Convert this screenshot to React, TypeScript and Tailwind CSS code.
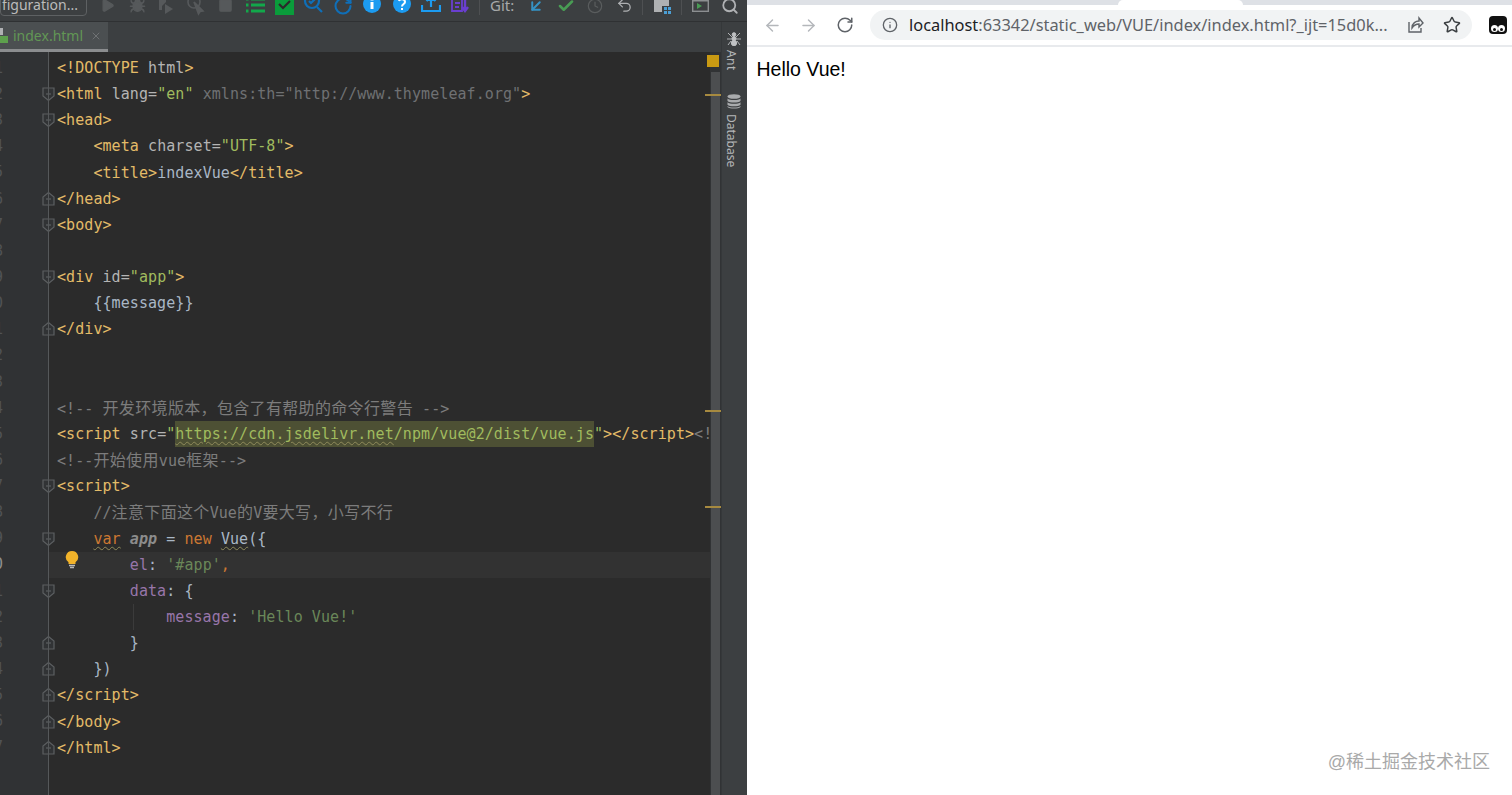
import React from "react";
import { ArrowLeft, ArrowRight, RotateCw, Star, Info, Search, Undo2, Clock, Check, ArrowDownLeft, X, Play, Square, Bug } from "lucide-react";

const mono = { fontFamily: '"DejaVu Sans Mono","Noto Sans CJK SC",monospace' };

function T({ children }: { children: React.ReactNode }) { return <span className="text-[#e3bb68]">{children}</span>; }
function A({ children }: { children: React.ReactNode }) { return <span className="text-[#b4b4b4]">{children}</span>; }
function S({ children }: { children: React.ReactNode }) { return <span className="text-[#a0bb5e]">{children}</span>; }
function G({ children }: { children: React.ReactNode }) { return <span className="text-[#6f7173]">{children}</span>; }
function C({ children }: { children: React.ReactNode }) { return <span className="text-[#7c7c7c]">{children}</span>; }
function H({ children }: { children: React.ReactNode }) { return <span className="text-[16px] tracking-[0.34px]" style={{ fontFamily: '"Noto Sans CJK SC",sans-serif' }}>{children}</span>; }
function P({ children }: { children: React.ReactNode }) { return <span className="text-[#9876aa]">{children}</span>; }
function W({ children, className = "" }: { children: React.ReactNode; className?: string }) {
  return <span className={`underline decoration-wavy decoration-[#8f8a5a] decoration-1 underline-offset-2 ${className}`}>{children}</span>;
}

const lines: { n: number; fold?: "open" | "close"; code?: React.ReactNode; cur?: boolean }[] = [
  { n: 1, code: <><T>&lt;!DOCTYPE</T> <A>html</A><T>&gt;</T></> },
  { n: 2, fold: "open", code: <><T>&lt;html</T> <A>lang=</A><S>"en"</S> <G>xmlns:th="http://www.thymeleaf.org"</G><T>&gt;</T></> },
  { n: 3, fold: "open", code: <T>&lt;head&gt;</T> },
  { n: 4, code: <>{"    "}<T>&lt;meta</T> <A>charset=</A><S>"UTF-8"</S><T>&gt;</T></> },
  { n: 5, code: <>{"    "}<T>&lt;title&gt;</T><span className="text-[#a9b7c6]">indexVue</span><T>&lt;/title&gt;</T></> },
  { n: 6, fold: "close", code: <T>&lt;/head&gt;</T> },
  { n: 7, fold: "open", code: <T>&lt;body&gt;</T> },
  { n: 8 },
  { n: 9, fold: "open", code: <><T>&lt;div</T> <A>id=</A><S>"app"</S><T>&gt;</T></> },
  { n: 10, code: <span className="text-[#a9b7c6]">{"    {{message}}"}</span> },
  { n: 11, fold: "close", code: <T>&lt;/div&gt;</T> },
  { n: 12 },
  { n: 13 },
  { n: 14, code: <C>&lt;!-- <H>开发环境版本，包含了有帮助的命令行警告</H> --&gt;</C> },
  { n: 15, code: <><T>&lt;script</T> <A>src=</A><S>"</S><span className="inline-block bg-[#4d5034] text-[#a0bb5e]"><W>https://cdn.jsdelivr.net</W>/npm/vue@2/dist/vue.js</span><S>"</S><T>&gt;&lt;/script&gt;</T><C>&lt;!-- 开发环境</C></> },
  { n: 16, code: <C>&lt;!--<H>开始使用</H>vue<H>框架</H>--&gt;</C> },
  { n: 17, fold: "open", code: <T>&lt;script&gt;</T> },
  { n: 18, code: <C>{"    //"}<H>注意下面这个</H>Vue<H>的</H>V<H>要大写，小写不行</H></C> },
  { n: 19, fold: "open", code: <>{"    "}<W className="text-[#cc7832]">var</W> <span className="font-bold italic text-[#8c8c8c]">app</span> <span className="text-[#a9b7c6]">=</span> <span className="text-[#cc7832]">new</span> <W className="text-[#a9b7c6]">Vue</W><span className="text-[#a9b7c6]">({"{"}</span></> },
  { n: 20, cur: true, code: <>{"        "}<P>el</P><span className="text-[#a9b7c6]">:</span> <span className="text-[#6a8759]">'#app'</span><span className="text-[#cc7832]">,</span></> },
  { n: 21, fold: "open", code: <>{"        "}<P>data</P><span className="text-[#a9b7c6]">: {"{"}</span></> },
  { n: 22, code: <>{"            "}<P>message</P><span className="text-[#a9b7c6]">:</span> <span className="text-[#6a8759]">'Hello Vue!'</span></> },
  { n: 23, fold: "close", code: <span className="text-[#a9b7c6]">{"        }"}</span> },
  { n: 24, fold: "close", code: <span className="text-[#a9b7c6]">{"    })"}</span> },
  { n: 25, fold: "close", code: <T>&lt;/script&gt;</T> },
  { n: 26, fold: "close", code: <T>&lt;/body&gt;</T> },
  { n: 27, fold: "close", code: <T>&lt;/html&gt;</T> },
];

function Fold({ kind }: { kind: "open" | "close" }) {
  return (
    <svg width="13" height="16" viewBox="0 0 13 16" className="absolute left-[42px] top-[5px]" fill="#313335" stroke="#5c5f61" strokeWidth="1.2">
      {kind === "open" ? <path d="M1 2h11v8l-5.500 4.500L1 10z" /> : <path d="M1 14h11V6L6.500 1.500 1 6z" />}
      <path d="M4 8h5" />
    </svg>
  );
}

function Cell({ children, w = "w-[29.4px]" }: { children: React.ReactNode; w?: string }) {
  return <div className={`${w} flex shrink-0 items-center justify-center`}>{children}</div>;
}
function Sep({ className }: { className: string }) {
  return <div className={`h-[18px] w-px shrink-0 bg-[#4e5052] ${className}`} />;
}

function Toolbar() {
  return (
    <div className="h-[22px] shrink-0 overflow-hidden border-b border-[#2f3133] bg-[#3c3f41]">
      <div className="flex h-[11px] items-center">
        <div className="-mt-[2px] flex h-[22px] w-[87px] shrink-0 items-center justify-end rounded-[4px] border border-[#5e6163] pr-[8px] text-[14px] text-[#bbbbbb]" style={{ fontFamily: '"Noto Sans",sans-serif' }}>
          figuration...
        </div>
        <div className="w-[6px] shrink-0" />
        <Cell><Play size={15} fill="#56595b" stroke="#56595b" /></Cell>
        <Cell><Bug size={17} fill="#56595b" stroke="#56595b" /></Cell>
        <Cell>
          <svg width="20" height="20" viewBox="0 0 20 20"><path d="M3 1h7v5l-4 4v4H3z" fill="#56595b" /><path d="M9 8l8 5-8 5z" fill="#56595b" /></svg>
        </Cell>
        <Cell>
          <svg width="20" height="20" viewBox="0 0 20 20" fill="none" stroke="#56595b" strokeWidth="1.600"><circle cx="8" cy="6" r="6" /><path d="M8 6l9 9-3 .5-1.500 2.500z" fill="#56595b" /></svg>
        </Cell>
        <Cell><Square size={15} fill="#56595b" stroke="#56595b" /></Cell>
        <Cell>
          <svg width="20" height="20" viewBox="0 0 20 20" stroke="#12a84b" strokeWidth="3"><path d="M6 3h14M6 9h14M6 15h14" /><path d="M1 3h2.500M1 9h2.500M1 15h2.500" /></svg>
        </Cell>
        <Cell>
          <svg width="19" height="19" viewBox="0 0 19 19"><rect width="19" height="19" fill="#0a9c3b" /><path d="M4 8l4 4 7-7" fill="none" stroke="#2b2b2b" strokeWidth="2.200" /></svg>
        </Cell>
        <Cell>
          <svg width="21" height="21" viewBox="0 0 21 21" fill="none" stroke="#0f6fb8" strokeWidth="2.200"><circle cx="9" cy="6" r="7" /><path d="M14 12l5 5M6 6l2 2 4-4" /></svg>
        </Cell>
        <Cell><RotateCw size={20} stroke="#0f6fb8" strokeWidth={2.500} /></Cell>
        <Cell>
          <svg width="20" height="20" viewBox="0 0 20 20"><circle cx="10" cy="8" r="9" fill="#1c9bf0" /><rect x="8.500" y="6" width="3" height="7" fill="#fff" /><rect x="8.500" y="2" width="3" height="2.500" fill="#fff" /></svg>
        </Cell>
        <Cell>
          <svg width="20" height="20" viewBox="0 0 20 20"><circle cx="10" cy="8" r="9" fill="#1c9bf0" /><path d="M7 5c1-3 6-2 6 1 0 2-3 2-3 4.500" fill="none" stroke="#fff" strokeWidth="2" /><rect x="9" y="12" width="2" height="2" fill="#fff" /></svg>
        </Cell>
        <Cell>
          <svg width="20" height="20" viewBox="0 0 20 20" fill="none" stroke="#1c9bf0" strokeWidth="2.200"><path d="M1 9v6h18V9" /><path d="M10 11V1" /><path d="M5.500 5L10 .5 14.500 5" fill="#1c9bf0" /></svg>
        </Cell>
        <Cell>
          <svg width="20" height="20" viewBox="0 0 20 20" fill="none" stroke="#6a3fd0" strokeWidth="1.800"><path d="M2 -1h10v16H2zM5 3h5M5 7h5M5 11h4" /><path d="M15 3v12M12 11l3 4 3-4" strokeWidth="2.400" /></svg>
        </Cell>
        <Sep className="ml-[4px]" />
        <div className="ml-[10px] w-[28px] shrink-0 text-[15px] text-[#a7a9aa]" style={{ fontFamily: '"Noto Sans",sans-serif' }}>Git:</div>
        <div className="w-[3.500px] shrink-0" />
        <Cell><ArrowDownLeft size={18} stroke="#3592c4" strokeWidth={2.600} /></Cell>
        <Cell><Check size={18} stroke="#499c54" strokeWidth={3.400} /></Cell>
        <Cell><Clock size={16} stroke="#5a5d5e" strokeWidth={1.800} /></Cell>
        <Cell><Undo2 size={17} stroke="#afb1b3" strokeWidth={1.800} /></Cell>
        <Sep className="ml-[3px]" />
        <Cell w="w-[38px]">
          <svg width="18" height="18" viewBox="0 0 18 18"><path d="M1 0h7l2 3h6v6H9v6H1z" fill="#afb1b3" /><rect x="11" y="10" width="3" height="3" fill="#4b9fd5" /><rect x="15" y="10" width="3" height="3" fill="#4b9fd5" /><rect x="11" y="14" width="3" height="3" fill="#4b9fd5" /><rect x="15" y="14" width="3" height="3" fill="#4b9fd5" /></svg>
        </Cell>
        <Sep className="" />
        <Cell w="w-[36px]">
          <svg width="17" height="16" viewBox="0 0 17 16"><rect x=".7" y=".7" width="15.600" height="12.600" fill="none" stroke="#8c8f91" strokeWidth="1.400" /><rect x="1" y="1" width="15" height="2.500" fill="#8c8f91" /><path d="M5 5l5 3-5 3z" fill="#499c54" /></svg>
        </Cell>
        <Cell w="w-[24px]"><Search size={18} stroke="#afb1b3" strokeWidth={2.400} /></Cell>
      </div>
    </div>
  );
}

function Editor() {
  return (
    <div className="relative flex min-h-0 min-w-0 flex-1 flex-col">
      <div className="flex h-[30px] shrink-0 bg-[#3c3f41]">
        <div className="flex h-full w-[108px] items-center border-b-[3px] border-[#8b8d8f] bg-[#4b4f51]">
          <svg width="8" height="18" viewBox="0 0 8 18" className="shrink-0"><rect x="0" y="1" width="3" height="7" fill="#afb1b3" /><rect x="0" y="9" width="8" height="7" fill="#5da04d" /></svg>
          <span className="ml-[5px] text-[14px] text-[#629755]" style={{ fontFamily: '"Noto Sans",sans-serif' }}>index.html</span>
          <X size={12} className="ml-[7px] shrink-0" stroke="#6f7274" />
        </div>
      </div>
      <div className="relative flex min-h-0 flex-1 overflow-hidden bg-[#2b2b2b]">
        <div className="absolute bottom-0 left-0 top-0 w-[48px] bg-[#303234]" />
        <div className="relative min-w-0 flex-1 overflow-hidden pt-[3px]">
          {lines.map((l) => (
            <div key={l.n} className={`relative flex h-[26.15px] items-center ${l.cur ? "bg-[#323232]" : ""}`}>
              <div className={`flex h-full w-[48px] shrink-0 items-center bg-[#303234] text-[15px] ${l.n === 20 ? "text-[#8f8f8f]" : "text-[#505355]"}`} style={mono}>
                <div className="flex w-[3px] justify-end overflow-hidden"><span>{l.n % 10}</span></div>
              </div>
              {l.fold && <Fold kind={l.fold} />}
              <pre className="pl-[9px] text-[15px] leading-[26.15px] tracking-[0.07px] whitespace-pre" style={mono}>{l.code}</pre>
              {l.n === 20 && (
                <svg width="14" height="18" viewBox="0 0 14 18" className="absolute left-[65px] top-[-1px]">
                  <path d="M7 0a6.200 6.200 0 0 1 3.500 11.300V13h-7v-1.700A6.200 6.200 0 0 1 7 0z" fill="#f2b32a" />
                  <path d="M4 14.500h6M5 16.500h4" stroke="#b8b8b8" strokeWidth="1.300" />
                </svg>
              )}
              {l.n === 22 && <div className="absolute left-[133px] top-0 h-full w-px bg-[#3b3b3b]" />}
            </div>
          ))}
        </div>
        <div className="absolute bottom-0 left-[48px] top-0 w-px bg-[#55585a]" />
        <div className="relative w-[11px] shrink-0 bg-[#313335]">
          <div className="absolute bottom-0 left-[1px] top-[20px] w-[9px] bg-[#4c4e50]" />
          <div className="absolute left-[-3px] top-[3px] h-[12px] w-[12px] bg-[#c99a13]" />
          <div className="absolute left-[-5px] top-[42px] h-[2px] w-[16px] bg-[#a78a40]" />
          <div className="absolute left-[-5px] top-[358px] h-[2px] w-[16px] bg-[#a78a40]" />
          <div className="absolute left-[-5px] top-[454px] h-[2px] w-[16px] bg-[#a78a40]" />
        </div>
      </div>
    </div>
  );
}

function SideStrip() {
  return (
    <div className="flex w-[26px] shrink-0 flex-col items-center border-l border-[#35383a] bg-[#3c3f41] pr-[2px] pt-[10px] text-[12px] text-[#b4b6b8]" style={{ fontFamily: '"Noto Sans",sans-serif' }}>
      <svg width="14" height="14" viewBox="0 0 14 14" fill="#c0c2c4" stroke="#c0c2c4">
        <circle cx="7" cy="2.500" r="1.800" /><ellipse cx="7" cy="6.500" rx="2" ry="2" /><ellipse cx="7" cy="11" rx="2.600" ry="2.800" />
        <path d="M1 1l4 4M13 1L9 5M0 7h14M1 13l3-4M13 13l-3-4" strokeWidth=".9" fill="none" />
      </svg>
      <span className="-ml-[5px] mt-[4px] leading-[20px] tracking-[0.4px] [writing-mode:vertical-rl]">Ant</span>
      <svg width="14" height="15" viewBox="0 0 14 15" className="mt-[23px]" fill="#a9abad">
        <ellipse cx="7" cy="2.500" rx="6.500" ry="2.300" /><path d="M.5 4.500c2 2 11 2 13 0v2.500c-2 2-11 2-13 0zM.5 8.200c2 2 11 2 13 0v2.600c-2 2-11 2-13 0zM.5 12c2 2 11 2 13 0v1c-2 2-11 2-13 0z" />
      </svg>
      <span className="-ml-[5px] mt-[5px] leading-[20px] [writing-mode:vertical-rl]">Database</span>
    </div>
  );
}

function Browser() {
  return (
    <div className="relative flex min-w-0 flex-1 flex-col bg-white">
      <div className="flex h-[5px] shrink-0 bg-[#dee1e6]">
        <div className="ml-[371px] w-[125px] rounded-t-[6px] bg-white" />
      </div>
      <div className="flex h-[42px] shrink-0 items-center border-b-2 border-[#e8eaed] pl-[16px]">
        <ArrowLeft size={19} stroke="#b4b7bb" strokeWidth={1.800} />
        <ArrowRight size={19} stroke="#b4b7bb" strokeWidth={1.800} className="ml-[17px]" />
        <RotateCw size={18} stroke="#5f6368" strokeWidth={2} className="ml-[18px]" />
        <div className="ml-[16px] flex h-[30px] w-[602px] shrink-0 items-center rounded-full bg-[#f1f3f4] pl-[12px]" style={{ fontFamily: '"Noto Sans",sans-serif' }}>
          <Info size={16} stroke="#5f6368" strokeWidth={2} />
          <span className="ml-[11px] whitespace-nowrap text-[16.4px] text-[#202124]">localhost<span className="text-[#5f6368]">:63342/static_web/VUE/index/index.html?_ijt=15d0k...</span></span>
          <svg width="18" height="18" viewBox="0 0 18 18" fill="none" stroke="#5f6368" strokeWidth="1.400" className="ml-auto">
            <path d="M3 6v10h12v-4" /><path d="M6 12c0-5 4-7 7-7V2l4 5-4 4V8c-3 0-5 1-7 4z" />
          </svg>
          <Star size={18} stroke="#3c4043" strokeWidth={2} className="ml-[19px] mr-[11px]" />
        </div>
        <svg width="18" height="18" viewBox="0 0 18 18" className="ml-[17px]">
          <rect width="18" height="18" rx="4" fill="#111" /><circle cx="5.500" cy="12.500" r="3.500" fill="#fff" /><circle cx="12.500" cy="12.500" r="3.500" fill="#fff" /><circle cx="5.500" cy="13.500" r="1.500" fill="#111" /><circle cx="12.500" cy="13.500" r="1.500" fill="#111" />
        </svg>
      </div>
      <div className="pl-[9.500px] pt-[8px] text-[19.500px] leading-[28px] text-black" style={{ fontFamily: '"Liberation Sans",sans-serif' }}>Hello Vue!</div>
      <div className="absolute bottom-[21px] right-[22px] text-[18px] leading-[24px] text-[#a9a9a9]" style={{ fontFamily: '"Liberation Sans","Noto Sans CJK SC",sans-serif' }}>@稀土掘金技术社区</div>
    </div>
  );
}

export default function App() {
  return (
    <div className="flex h-[795px] w-[1512px] overflow-hidden">
      <div className="flex w-[747px] shrink-0 flex-col">
        <Toolbar />
        <div className="flex min-h-0 flex-1">
          <Editor />
          <SideStrip />
        </div>
      </div>
      <Browser />
    </div>
  );
}
